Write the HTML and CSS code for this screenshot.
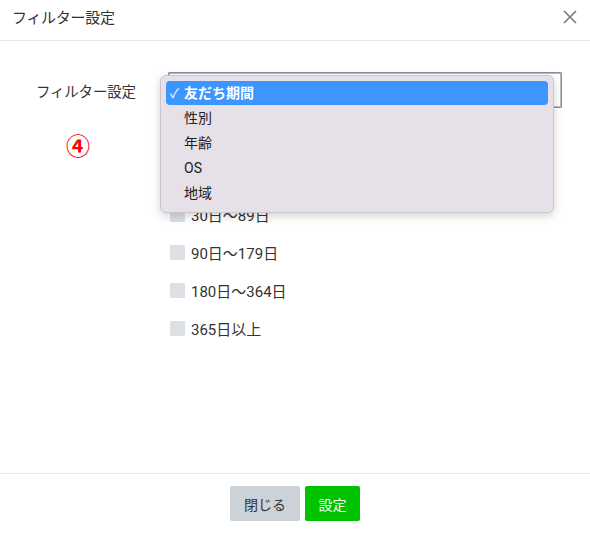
FILE: index.html
```html
<!DOCTYPE html>
<html lang="ja">
<head>
<meta charset="utf-8">
<title>フィルター設定</title>
<link rel="stylesheet" href="styles.css">
</head>
<body>
<div class="modal">
  <div class="header">
    <div class="title">フィルター設定</div>
    <svg class="close" width="14" height="14" viewBox="0 0 14 14"><path d="M1 1 L13 13 M13 1 L1 13" stroke="#7a7a7a" stroke-width="1.6" fill="none"/></svg>
  </div>
  <div class="body">
    <div class="form">
      <div class="label">フィルター設定</div>
      <div class="field">
        <div class="select"></div>
        <ul class="checks">
          <li><span class="box"></span>7日未満</li>
          <li><span class="box"></span>7日〜29日</li>
          <li><span class="box"></span>30日〜89日</li>
          <li><span class="box"></span>90日〜179日</li>
          <li><span class="box"></span>180日〜364日</li>
          <li><span class="box"></span>365日以上</li>
        </ul>
      </div>
    </div>
    <div class="note">④</div>
    <ul class="menu">
      <li class="selected"><span class="tick">✓</span>友だち期間</li>
      <li>性別</li>
      <li>年齢</li>
      <li>OS</li>
      <li>地域</li>
    </ul>
  </div>
  <div class="footer">
    <button class="btn btn-close">閉じる</button>
    <button class="btn btn-ok">設定</button>
  </div>
</div>
</body>
</html>
```
FILE: styles.css
```css
html, body {
  margin: 0;
  padding: 0;
  background: #fff;
}
body {
  font-family: "Noto Sans CJK JP", "Noto Sans", sans-serif;
  color: #333;
  width: 590px;
  height: 534px;
  overflow: hidden;
}
.modal {
  display: flex;
  flex-direction: column;
  height: 534px;
}
.header {
  height: 40px;
  border-bottom: 1px solid #e8e8e8;
  display: flex;
  align-items: center;
  justify-content: space-between;
  padding: 0 13px 0 12px;
  box-sizing: content-box;
}
.title {
  font-size: 15px;
  color: #333;
  letter-spacing: -0.3px;
  margin-top: -8px;
}
.close {
  margin-top: -7px;
}
.body {
  flex: 1;
  position: relative;
}
.form {
  display: grid;
  grid-template-columns: 168px 394px;
  padding-top: 31px;
}
.label {
  padding-left: 36px;
  font-size: 14.5px;
  line-height: 36px;
  letter-spacing: -0.2px;
  margin-top: 1px;
}
.select {
  height: 34px;
  border: 1px solid #8c8d9c;
  box-shadow: inset 0 0 0 1px #b9bac6;
  border-radius: 1px;
  background: #fff;
}
.checks {
  list-style: none;
  margin: 0;
  padding: 11px 0 0 2px;
}
.checks li {
  display: flex;
  align-items: center;
  height: 38px;
  font-family: "Roboto", "Noto Sans CJK JP", sans-serif;
  font-size: 15px;
  color: #333;
}
.box {
  width: 15px;
  height: 15px;
  background: #dcdfe4;
  border-radius: 1px;
  margin-right: 6px;
}
.note {
  position: absolute;
  left: 66px;
  top: 89px;
  font-size: 24px;
  line-height: 30px;
  font-weight: bold;
  color: #f00;
}
.menu {
  position: absolute;
  left: 160px;
  top: 34px;
  margin: 0;
  padding: 5px 5px 6px;
  box-sizing: content-box;
  list-style: none;
  background: #e6e1e8;
  border: 1px solid #c9c5cb;
  border-radius: 6px;
  box-shadow: 0 3px 10px rgba(0, 0, 0, 0.18);
  width: 382px;
}
.menu li {
  height: 25px;
  line-height: 25px;
  font-family: "Roboto", "Noto Sans CJK JP", sans-serif;
  font-size: 14px;
  color: #222;
  padding-left: 18px;
  border-radius: 4px;
}
.menu li.selected {
  height: 24px;
  line-height: 24px;
  margin-bottom: 1px;
  background: #3d95ff;
  color: #fff;
  font-weight: bold;
  padding-left: 4px;
}
.tick {
  display: inline-block;
  width: 14px;
  font-weight: normal;
  font-size: 13px;
}
.footer {
  border-top: 1px solid #e8e8e8;
  display: flex;
  justify-content: center;
  align-items: flex-start;
  gap: 5px;
  padding-top: 12px;
  box-sizing: border-box;
  height: 61px;
}
.btn {
  height: 35px;
  border: none;
  border-radius: 2px;
  font-family: "Noto Sans CJK JP", sans-serif;
  font-size: 14px;
  padding: 0;
}
.btn-close {
  width: 70px;
  background: #cdd1d8;
  color: #333;
}
.btn-ok {
  width: 55px;
  background: #00c300;
  color: #fff;
}
```
